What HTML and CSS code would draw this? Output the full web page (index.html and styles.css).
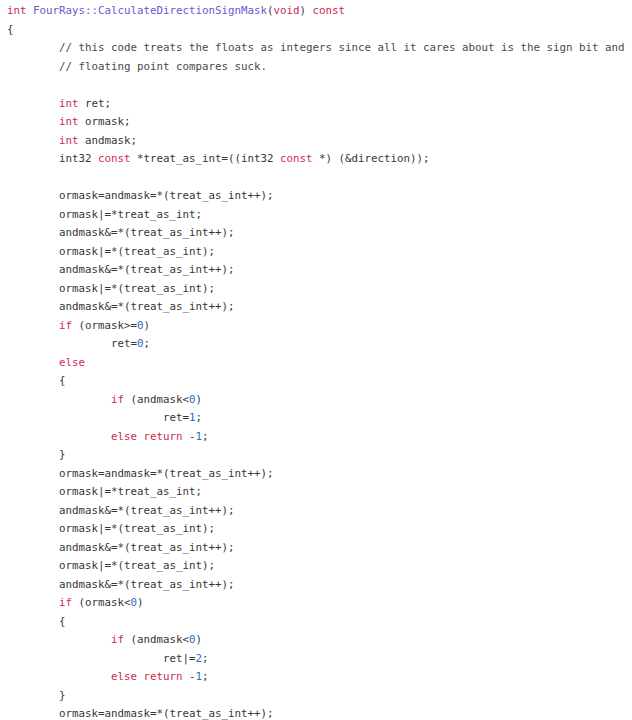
FILE: index.html
```html
<!DOCTYPE html>
<html>
<head>
<meta charset="utf-8">
<link rel="stylesheet" href="styles.css">
</head>
<body>
<div class="code">
  <div class="ln"><span class="kw">int</span> <span class="fn">FourRays::CalculateDirectionSignMask</span>(<span class="kw">void</span>) <span class="kw">const</span></div>
  <div class="ln">{</div>
  <div class="ln i1"><span class="cm">// this code treats the floats as integers since all it cares about is the sign bit and</span></div>
  <div class="ln i1"><span class="cm">// floating point compares suck.</span></div>
  <div class="ln blank"></div>
  <div class="ln i1"><span class="kw">int</span> ret;</div>
  <div class="ln i1"><span class="kw">int</span> ormask;</div>
  <div class="ln i1"><span class="kw">int</span> andmask;</div>
  <div class="ln i1">int32 <span class="kw">const</span> *treat_as_int=((int32 <span class="kw">const</span> *) (&amp;direction));</div>
  <div class="ln blank"></div>
  <div class="ln i1">ormask=andmask=*(treat_as_int++);</div>
  <div class="ln i1">ormask|=*treat_as_int;</div>
  <div class="ln i1">andmask&amp;=*(treat_as_int++);</div>
  <div class="ln i1">ormask|=*(treat_as_int);</div>
  <div class="ln i1">andmask&amp;=*(treat_as_int++);</div>
  <div class="ln i1">ormask|=*(treat_as_int);</div>
  <div class="ln i1">andmask&amp;=*(treat_as_int++);</div>
  <div class="ln i1"><span class="kw">if</span> (ormask&gt;=<span class="num">0</span>)</div>
  <div class="ln i2">ret=<span class="num">0</span>;</div>
  <div class="ln i1"><span class="kw">else</span></div>
  <div class="ln i1">{</div>
  <div class="ln i2"><span class="kw">if</span> (andmask&lt;<span class="num">0</span>)</div>
  <div class="ln i3">ret=<span class="num">1</span>;</div>
  <div class="ln i2"><span class="kw">else</span> <span class="kw">return</span> -<span class="num">1</span>;</div>
  <div class="ln i1">}</div>
  <div class="ln i1">ormask=andmask=*(treat_as_int++);</div>
  <div class="ln i1">ormask|=*treat_as_int;</div>
  <div class="ln i1">andmask&amp;=*(treat_as_int++);</div>
  <div class="ln i1">ormask|=*(treat_as_int);</div>
  <div class="ln i1">andmask&amp;=*(treat_as_int++);</div>
  <div class="ln i1">ormask|=*(treat_as_int);</div>
  <div class="ln i1">andmask&amp;=*(treat_as_int++);</div>
  <div class="ln i1"><span class="kw">if</span> (ormask&lt;<span class="num">0</span>)</div>
  <div class="ln i1">{</div>
  <div class="ln i2"><span class="kw">if</span> (andmask&lt;<span class="num">0</span>)</div>
  <div class="ln i3">ret|=<span class="num">2</span>;</div>
  <div class="ln i2"><span class="kw">else</span> <span class="kw">return</span> -<span class="num">1</span>;</div>
  <div class="ln i1">}</div>
  <div class="ln i1">ormask=andmask=*(treat_as_int++);</div>
</div>
</body>
</html>
```

FILE: styles.css
```css
html, body {
  margin: 0;
  padding: 0;
  background: #ffffff;
}

.code {
  padding: 2px 0 0 7px;
  font-family: "DejaVu Sans Mono", "Liberation Mono", monospace;
  font-size: 10.8px;
  line-height: 18.5px;
  color: #363636;
  display: flex;
  flex-direction: column;
}

.ln {
  white-space: pre;
  height: 18.5px;
}

.i1 {
  padding-left: 8ch;
}

.i2 {
  padding-left: 16ch;
}

.i3 {
  padding-left: 24ch;
}

.kw {
  color: #cf2a4f;
}

.fn {
  color: #6a5acd;
}

.num {
  color: #2b6cc4;
}

.cm {
  color: #4a4a4a;
}
```
